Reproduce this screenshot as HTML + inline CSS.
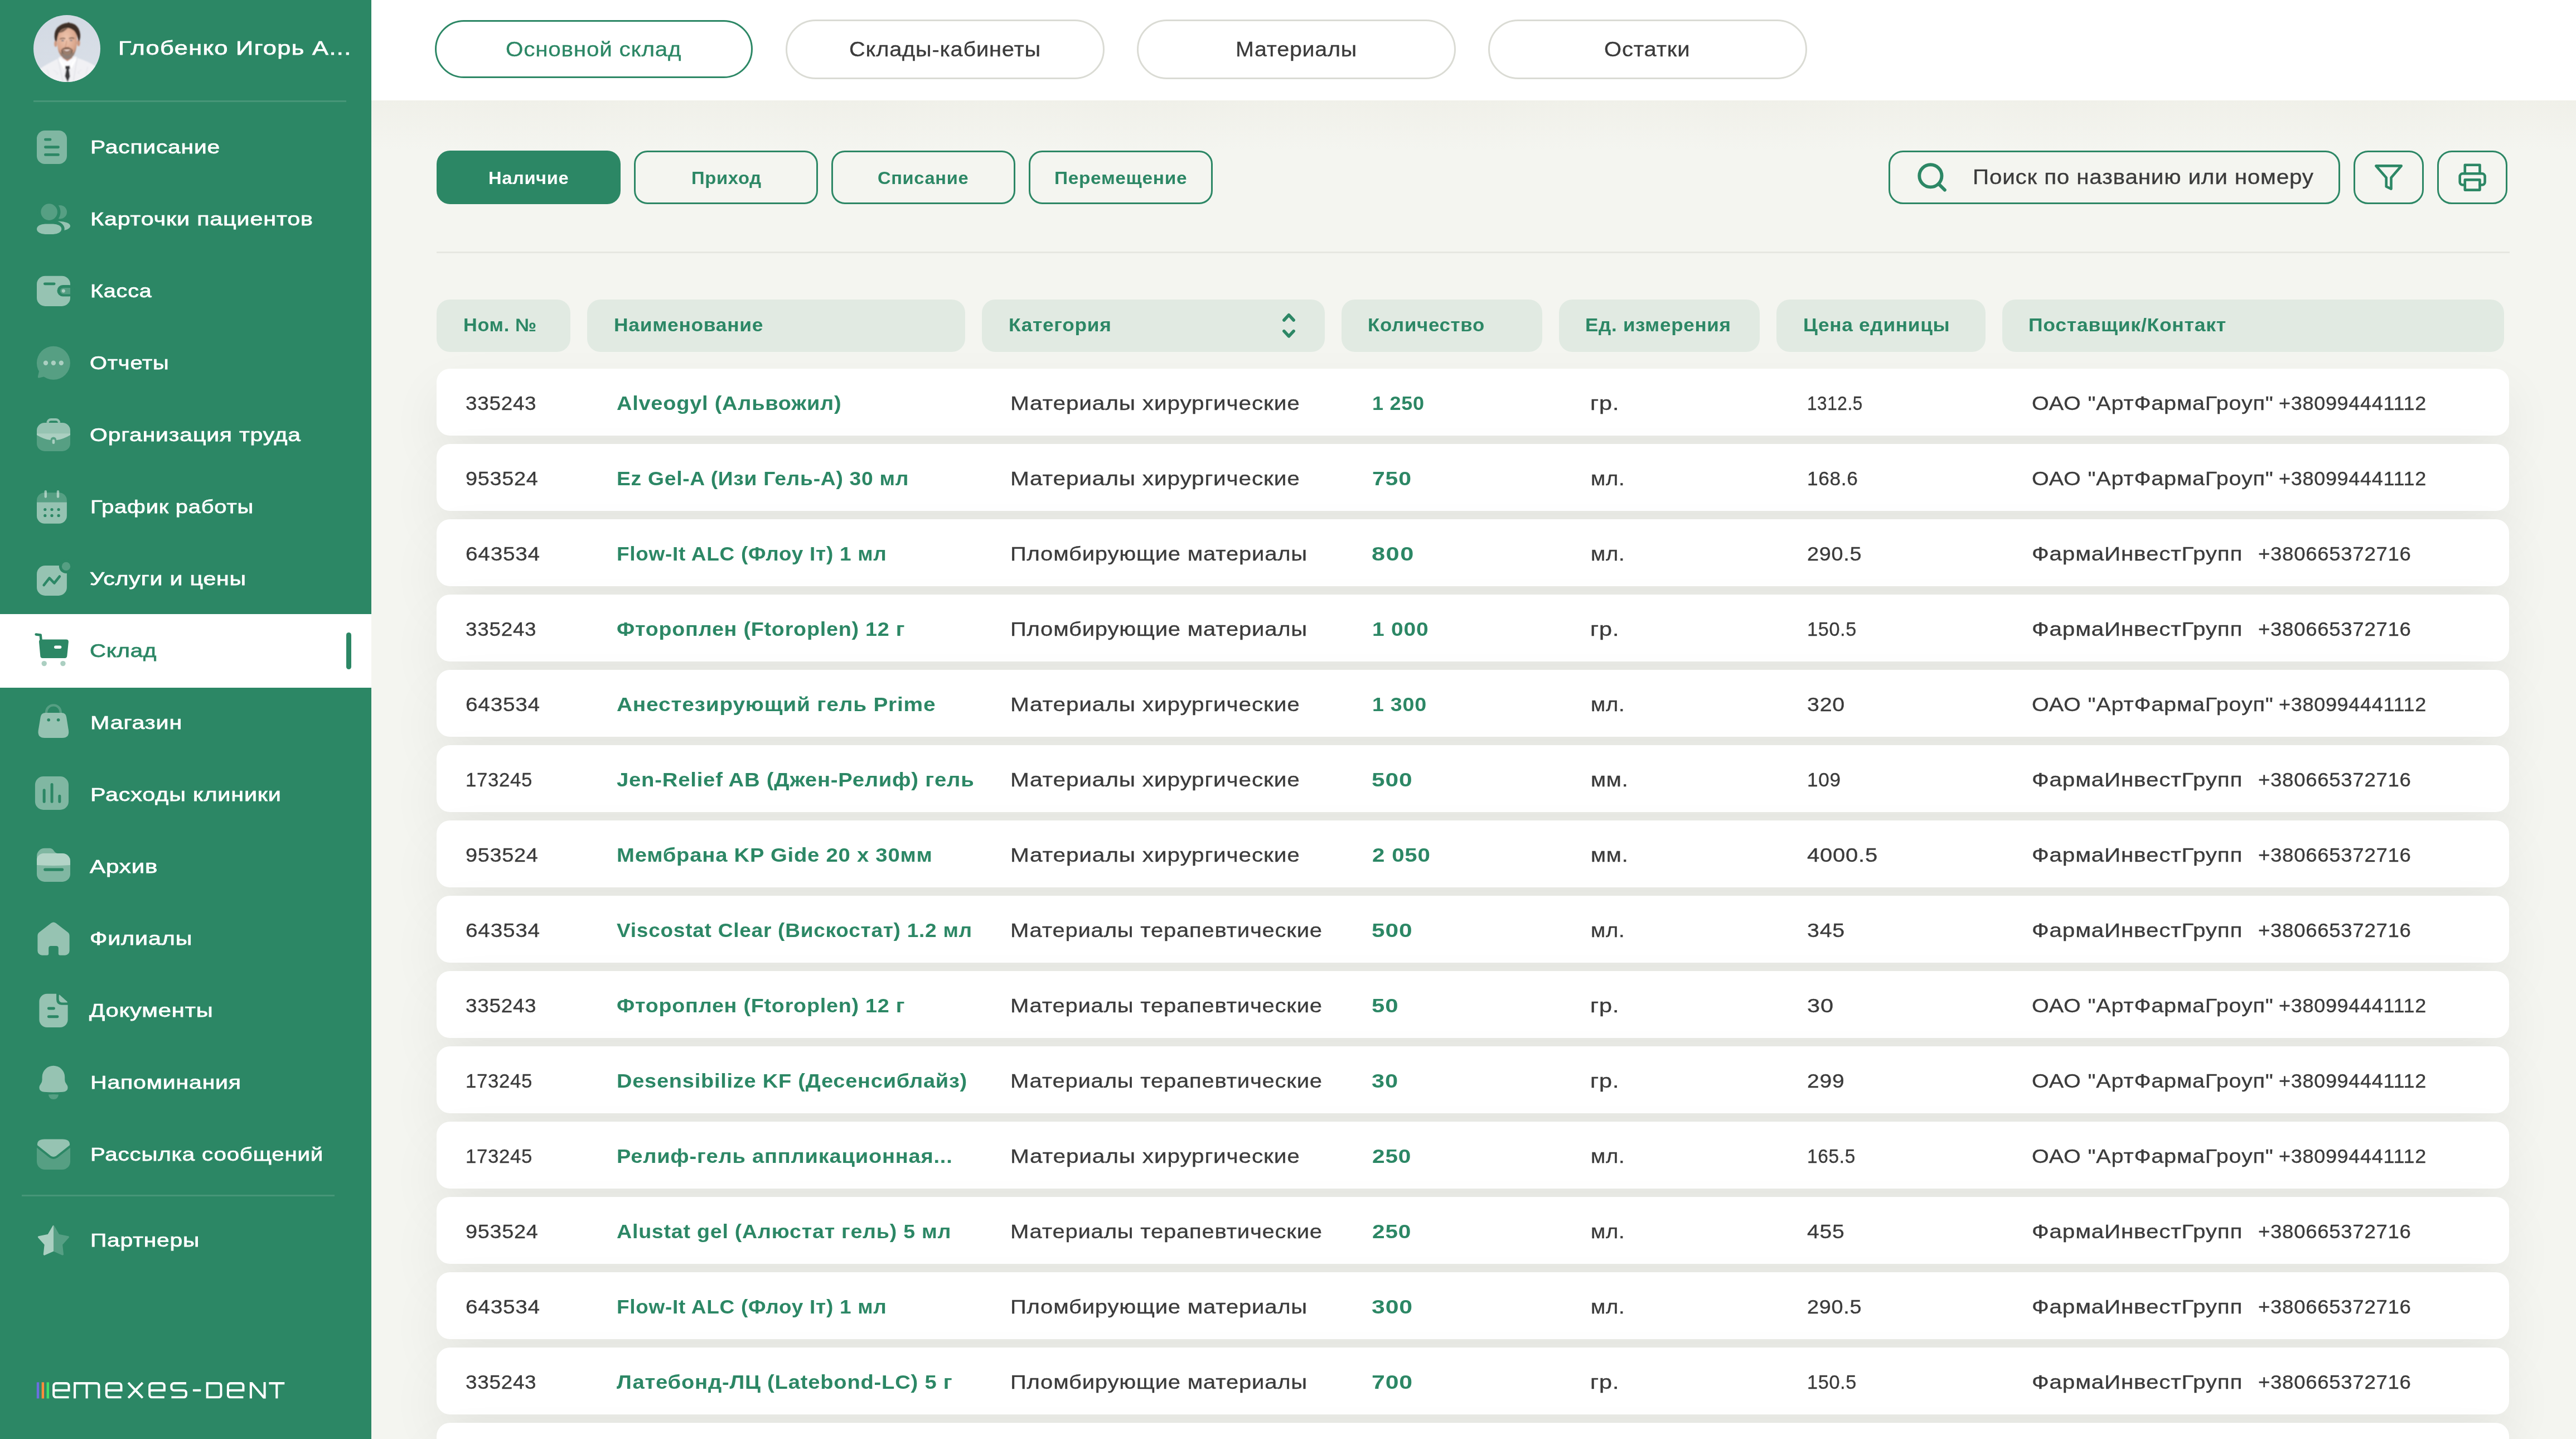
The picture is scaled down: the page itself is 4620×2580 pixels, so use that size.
<!DOCTYPE html>
<html lang="ru"><head><meta charset="utf-8"><title>Склад</title>
<style>
html,body{margin:0;padding:0}
body{width:4620px;height:2580px;overflow:hidden;position:relative;background:#f4f5f0;font-family:"Liberation Sans",sans-serif;}
.t{position:absolute;white-space:nowrap;margin:0;padding:0;transform-origin:0 50%}
.b{position:absolute;box-sizing:border-box}
svg{position:absolute;overflow:visible}
.row{position:absolute;left:783px;width:3717px;height:120px;background:#fff;border-radius:24px;box-shadow:0 40px 90px 0 rgba(10,20,0,0.064)}
.hc{position:absolute;top:537px;height:94px;background:#e1eae2;border-radius:24px}
</style></head><body>

<div class="b" style="left:666px;top:180px;width:3954px;height:90px;background:linear-gradient(#f0f0e9,#f4f5f0)"></div>
<div class="b" style="left:666px;top:0px;width:3954px;height:180px;background:#fff"></div>
<div class="b" style="left:780px;top:36px;width:570px;height:104px;border:3px solid #2c8765;border-radius:52px"></div>
<div class="b" style="left:1408.5px;top:34.5px;width:572.5px;height:107.5px;border:3px solid #dadbd4;border-radius:54px"></div>
<div class="b" style="left:2038.5px;top:34.5px;width:572.5px;height:107.5px;border:3px solid #dadbd4;border-radius:54px"></div>
<div class="b" style="left:2668.5px;top:34.5px;width:572.5px;height:107.5px;border:3px solid #dadbd4;border-radius:54px"></div>
<div class="t" id="t1" style="left:907.0px;top:64.6px;font-size:37px;line-height:48px;color:#2c8765;letter-spacing:0.74px;-webkit-text-stroke:0.35px #2c8765;transform:scaleX(1.091);">Основной склад</div>
<div class="t" id="t2" style="left:1523.0px;top:64.6px;font-size:37px;line-height:48px;color:#3b3b3b;letter-spacing:0.74px;-webkit-text-stroke:0.35px #3b3b3b;transform:scaleX(1.075);">Склады-кабинеты</div>
<div class="t" id="t3" style="left:2216.2px;top:64.6px;font-size:37px;line-height:48px;color:#3b3b3b;letter-spacing:0.74px;-webkit-text-stroke:0.35px #3b3b3b;transform:scaleX(1.064);">Материалы</div>
<div class="t" id="t4" style="left:2877.4px;top:64.6px;font-size:37px;line-height:48px;color:#3b3b3b;letter-spacing:0.74px;-webkit-text-stroke:0.35px #3b3b3b;transform:scaleX(1.083);">Остатки</div>
<div class="b" style="left:783px;top:270px;width:330px;height:96px;background:#2c8765;border-radius:24px"></div>
<div class="b" style="left:1137px;top:270px;width:330px;height:96px;border:3px solid #2c8765;border-radius:24px"></div>
<div class="b" style="left:1491px;top:270px;width:330px;height:96px;border:3px solid #2c8765;border-radius:24px"></div>
<div class="b" style="left:1845px;top:270px;width:330px;height:96px;border:3px solid #2c8765;border-radius:24px"></div>
<div class="t" id="t5" style="left:875.9px;top:299.0px;font-size:31.5px;line-height:41px;color:#fff;font-weight:700;letter-spacing:0.63px;transform:scaleX(1.036);">Наличие</div>
<div class="t" id="t6" style="left:1239.7px;top:299.0px;font-size:31.5px;line-height:41px;color:#2c8765;font-weight:700;letter-spacing:0.63px;transform:scaleX(1.042);">Приход</div>
<div class="t" id="t7" style="left:1574.2px;top:299.0px;font-size:31.5px;line-height:41px;color:#2c8765;font-weight:700;letter-spacing:0.63px;transform:scaleX(1.036);">Списание</div>
<div class="t" id="t8" style="left:1891.1px;top:299.0px;font-size:31.5px;line-height:41px;color:#2c8765;font-weight:700;letter-spacing:0.63px;transform:scaleX(1.062);">Перемещение</div>
<div class="b" style="left:3387px;top:270px;width:810px;height:96px;border:3px solid #2c8765;border-radius:26px"></div>
<div class="b" style="left:4221px;top:270px;width:126px;height:96px;border:3px solid #2c8765;border-radius:26px"></div>
<div class="b" style="left:4370.5px;top:270px;width:126px;height:96px;border:3px solid #2c8765;border-radius:26px"></div>
<div class="t" id="t9" style="left:3537.6px;top:294.3px;font-size:36.5px;line-height:47px;color:#3b3b3b;letter-spacing:0.73px;-webkit-text-stroke:0.35px #3b3b3b;transform:scaleX(1.108);">Поиск по названию или номеру</div>
<svg style="left:0;top:0" width="4620" height="400" viewBox="0 0 4620 400" fill="none" stroke="#2c8765" stroke-linecap="round" stroke-linejoin="round">
<circle cx="3462.4" cy="315.3" r="20.1" stroke-width="5.9"/>
<path d="M3477 329.8 L3487.9 340.6" stroke-width="5.9"/>
<path d="M4261.3 297.4 H4306.7 L4288.5 318.6 V338.6 L4279.7 334.5 V318.6 Z" stroke-width="4.6"/>
<path d="M4420.8 311 V295.7 H4447.5 V311" stroke-width="4.6"/>
<path d="M4420.8 331.5 H4416.7 A5 5 0 0 1 4411.7 326.5 V316.3 A5 5 0 0 1 4416.7 311.3 H4451.6 A5 5 0 0 1 4456.6 316.3 V326.5 A5 5 0 0 1 4451.6 331.5 H4447.5" stroke-width="4.6"/>
<path d="M4420.8 322.4 H4447.5 V340.6 H4420.8 Z" stroke-width="4.6"/>
</svg>

<div class="b" style="left:783px;top:450.5px;width:3718px;height:3px;background:#e6e7e1"></div>
<div class="hc" style="left:783px;width:240px"></div>
<div class="hc" style="left:1053px;width:678px"></div>
<div class="hc" style="left:1761px;width:614.5px"></div>
<div class="hc" style="left:2406px;width:360px"></div>
<div class="hc" style="left:2795.5px;width:360.5px"></div>
<div class="hc" style="left:3186px;width:374.5px"></div>
<div class="hc" style="left:3590.5px;width:900.5px"></div>
<div class="t" id="t10" style="left:831.3px;top:560.9px;font-size:32.8px;line-height:43px;color:#2c8765;font-weight:700;letter-spacing:0.66px;transform:scaleX(1.045);">Ном. №</div>
<div class="t" id="t11" style="left:1101.2px;top:560.9px;font-size:32.8px;line-height:43px;color:#2c8765;font-weight:700;letter-spacing:0.66px;transform:scaleX(1.079);">Наименование</div>
<div class="t" id="t12" style="left:1808.7px;top:560.9px;font-size:32.8px;line-height:43px;color:#2c8765;font-weight:700;letter-spacing:0.66px;transform:scaleX(1.076);">Категория</div>
<div class="t" id="t13" style="left:2453.3px;top:560.9px;font-size:32.8px;line-height:43px;color:#2c8765;font-weight:700;letter-spacing:0.66px;transform:scaleX(1.062);">Количество</div>
<div class="t" id="t14" style="left:2843.4px;top:560.9px;font-size:32.8px;line-height:43px;color:#2c8765;font-weight:700;letter-spacing:0.66px;transform:scaleX(1.068);">Ед. измерения</div>
<div class="t" id="t15" style="left:3233.8px;top:560.9px;font-size:32.8px;line-height:43px;color:#2c8765;font-weight:700;letter-spacing:0.66px;transform:scaleX(1.075);">Цена единицы</div>
<div class="t" id="t16" style="left:3638.4px;top:560.9px;font-size:32.8px;line-height:43px;color:#2c8765;font-weight:700;letter-spacing:0.66px;transform:scaleX(1.085);">Поставщик/Контакт</div>
<svg style="left:2280px;top:540px" width="60" height="90" viewBox="2280 540 60 90"><path d="M2302.9 574L2311.5 564.7L2320.1 574M2302.9 593.6L2311.5 602.9L2320.1 593.6" fill="none" stroke="#2c8765" stroke-width="5.6" stroke-linecap="round" stroke-linejoin="round"/></svg>
<div class="row" style="top:661px"></div>
<div class="t" id="t17" style="left:835.2px;top:700.9px;font-size:34.7px;line-height:45px;color:#3b3b3b;letter-spacing:0.69px;-webkit-text-stroke:0.35px #3b3b3b;transform:scaleX(1.062);">335243</div>
<div class="t" id="t18" style="left:1105.6px;top:700.9px;font-size:34.7px;line-height:45px;color:#2c8765;font-weight:700;letter-spacing:0.69px;transform:scaleX(1.095);">Alveogyl (Альвожил)</div>
<div class="t" id="t19" style="left:1812.0px;top:700.9px;font-size:34.7px;line-height:45px;color:#3b3b3b;letter-spacing:0.69px;-webkit-text-stroke:0.35px #3b3b3b;transform:scaleX(1.171);">Материалы хирургические</div>
<div class="t" id="t20" style="left:2460.7px;top:700.9px;font-size:34.7px;line-height:45px;color:#2c8765;font-weight:700;letter-spacing:0.69px;transform:scaleX(1.038);">1 250</div>
<div class="t" id="t21" style="left:2852.4px;top:700.9px;font-size:34.7px;line-height:45px;color:#3b3b3b;letter-spacing:0.69px;-webkit-text-stroke:0.35px #3b3b3b;transform:scaleX(1.198);">гр.</div>
<div class="t" id="t22" style="left:3241.4px;top:700.9px;font-size:34.7px;line-height:45px;color:#3b3b3b;letter-spacing:0.69px;-webkit-text-stroke:0.35px #3b3b3b;transform:scaleX(0.906);">1312.5</div>
<div class="t" id="t23" style="left:3643.6px;top:700.9px;font-size:34.7px;line-height:45px;color:#3b3b3b;letter-spacing:0.69px;-webkit-text-stroke:0.35px #3b3b3b;transform:scaleX(1.142);">ОАО "АртФармаГроуп"</div>
<div class="t" id="t24" style="left:4086.6px;top:700.9px;font-size:34.7px;line-height:45px;color:#3b3b3b;letter-spacing:0.69px;-webkit-text-stroke:0.35px #3b3b3b;transform:scaleX(1.037);">+380994441112</div>
<div class="row" style="top:796px"></div>
<div class="t" id="t25" style="left:835.1px;top:835.9px;font-size:34.7px;line-height:45px;color:#3b3b3b;letter-spacing:0.69px;-webkit-text-stroke:0.35px #3b3b3b;transform:scaleX(1.089);">953524</div>
<div class="t" id="t26" style="left:1105.6px;top:835.9px;font-size:34.7px;line-height:45px;color:#2c8765;font-weight:700;letter-spacing:0.69px;transform:scaleX(1.073);">Ez Gel-A (Изи Гель-А) 30 мл</div>
<div class="t" id="t27" style="left:1812.0px;top:835.9px;font-size:34.7px;line-height:45px;color:#3b3b3b;letter-spacing:0.69px;-webkit-text-stroke:0.35px #3b3b3b;transform:scaleX(1.171);">Материалы хирургические</div>
<div class="t" id="t28" style="left:2460.5px;top:835.9px;font-size:34.7px;line-height:45px;color:#2c8765;font-weight:700;letter-spacing:0.69px;transform:scaleX(1.181);">750</div>
<div class="t" id="t29" style="left:2852.6px;top:835.9px;font-size:34.7px;line-height:45px;color:#3b3b3b;letter-spacing:0.69px;-webkit-text-stroke:0.35px #3b3b3b;transform:scaleX(1.101);">мл.</div>
<div class="t" id="t30" style="left:3241.2px;top:835.9px;font-size:34.7px;line-height:45px;color:#3b3b3b;letter-spacing:0.69px;-webkit-text-stroke:0.35px #3b3b3b;transform:scaleX(1.015);">168.6</div>
<div class="t" id="t31" style="left:3643.6px;top:835.9px;font-size:34.7px;line-height:45px;color:#3b3b3b;letter-spacing:0.69px;-webkit-text-stroke:0.35px #3b3b3b;transform:scaleX(1.142);">ОАО "АртФармаГроуп"</div>
<div class="t" id="t32" style="left:4086.6px;top:835.9px;font-size:34.7px;line-height:45px;color:#3b3b3b;letter-spacing:0.69px;-webkit-text-stroke:0.35px #3b3b3b;transform:scaleX(1.037);">+380994441112</div>
<div class="row" style="top:931px"></div>
<div class="t" id="t33" style="left:835.1px;top:970.9px;font-size:34.7px;line-height:45px;color:#3b3b3b;letter-spacing:0.69px;-webkit-text-stroke:0.35px #3b3b3b;transform:scaleX(1.117);">643534</div>
<div class="t" id="t34" style="left:1105.7px;top:970.9px;font-size:34.7px;line-height:45px;color:#2c8765;font-weight:700;letter-spacing:0.69px;transform:scaleX(1.065);">Flow-It ALC (Флоу Іт) 1 мл</div>
<div class="t" id="t35" style="left:1812.0px;top:970.9px;font-size:34.7px;line-height:45px;color:#3b3b3b;letter-spacing:0.69px;-webkit-text-stroke:0.35px #3b3b3b;transform:scaleX(1.153);">Пломбирующие материалы</div>
<div class="t" id="t36" style="left:2460.3px;top:970.9px;font-size:34.7px;line-height:45px;color:#2c8765;font-weight:700;letter-spacing:1.19px;transform:scaleX(1.25);">800</div>
<div class="t" id="t37" style="left:2852.6px;top:970.9px;font-size:34.7px;line-height:45px;color:#3b3b3b;letter-spacing:0.69px;-webkit-text-stroke:0.35px #3b3b3b;transform:scaleX(1.101);">мл.</div>
<div class="t" id="t38" style="left:3241.1px;top:970.9px;font-size:34.7px;line-height:45px;color:#3b3b3b;letter-spacing:0.69px;-webkit-text-stroke:0.35px #3b3b3b;transform:scaleX(1.09);">290.5</div>
<div class="t" id="t39" style="left:3643.6px;top:970.9px;font-size:34.7px;line-height:45px;color:#3b3b3b;letter-spacing:0.69px;-webkit-text-stroke:0.35px #3b3b3b;transform:scaleX(1.166);">ФармаИнвестГрупп</div>
<div class="t" id="t40" style="left:4050.2px;top:970.9px;font-size:34.7px;line-height:45px;color:#3b3b3b;letter-spacing:0.69px;-webkit-text-stroke:0.35px #3b3b3b;transform:scaleX(1.053);">+380665372716</div>
<div class="row" style="top:1066px"></div>
<div class="t" id="t41" style="left:835.2px;top:1105.9px;font-size:34.7px;line-height:45px;color:#3b3b3b;letter-spacing:0.69px;-webkit-text-stroke:0.35px #3b3b3b;transform:scaleX(1.062);">335243</div>
<div class="t" id="t42" style="left:1105.6px;top:1105.9px;font-size:34.7px;line-height:45px;color:#2c8765;font-weight:700;letter-spacing:0.69px;transform:scaleX(1.088);">Фтороплен (Ftoroplen) 12 г</div>
<div class="t" id="t43" style="left:1812.0px;top:1105.9px;font-size:34.7px;line-height:45px;color:#3b3b3b;letter-spacing:0.69px;-webkit-text-stroke:0.35px #3b3b3b;transform:scaleX(1.153);">Пломбирующие материалы</div>
<div class="t" id="t44" style="left:2460.6px;top:1105.9px;font-size:34.7px;line-height:45px;color:#2c8765;font-weight:700;letter-spacing:0.69px;transform:scaleX(1.123);">1 000</div>
<div class="t" id="t45" style="left:2852.4px;top:1105.9px;font-size:34.7px;line-height:45px;color:#3b3b3b;letter-spacing:0.69px;-webkit-text-stroke:0.35px #3b3b3b;transform:scaleX(1.198);">гр.</div>
<div class="t" id="t46" style="left:3241.3px;top:1105.9px;font-size:34.7px;line-height:45px;color:#3b3b3b;letter-spacing:0.69px;-webkit-text-stroke:0.35px #3b3b3b;transform:scaleX(0.9859);">150.5</div>
<div class="t" id="t47" style="left:3643.6px;top:1105.9px;font-size:34.7px;line-height:45px;color:#3b3b3b;letter-spacing:0.69px;-webkit-text-stroke:0.35px #3b3b3b;transform:scaleX(1.166);">ФармаИнвестГрупп</div>
<div class="t" id="t48" style="left:4050.2px;top:1105.9px;font-size:34.7px;line-height:45px;color:#3b3b3b;letter-spacing:0.69px;-webkit-text-stroke:0.35px #3b3b3b;transform:scaleX(1.053);">+380665372716</div>
<div class="row" style="top:1201px"></div>
<div class="t" id="t49" style="left:835.1px;top:1240.9px;font-size:34.7px;line-height:45px;color:#3b3b3b;letter-spacing:0.69px;-webkit-text-stroke:0.35px #3b3b3b;transform:scaleX(1.117);">643534</div>
<div class="t" id="t50" style="left:1105.6px;top:1240.9px;font-size:34.7px;line-height:45px;color:#2c8765;font-weight:700;letter-spacing:0.69px;transform:scaleX(1.121);">Анестезирующий гель Prime</div>
<div class="t" id="t51" style="left:1812.0px;top:1240.9px;font-size:34.7px;line-height:45px;color:#3b3b3b;letter-spacing:0.69px;-webkit-text-stroke:0.35px #3b3b3b;transform:scaleX(1.171);">Материалы хирургические</div>
<div class="t" id="t52" style="left:2460.6px;top:1240.9px;font-size:34.7px;line-height:45px;color:#2c8765;font-weight:700;letter-spacing:0.69px;transform:scaleX(1.084);">1 300</div>
<div class="t" id="t53" style="left:2852.6px;top:1240.9px;font-size:34.7px;line-height:45px;color:#3b3b3b;letter-spacing:0.69px;-webkit-text-stroke:0.35px #3b3b3b;transform:scaleX(1.101);">мл.</div>
<div class="t" id="t54" style="left:3241.0px;top:1240.9px;font-size:34.7px;line-height:45px;color:#3b3b3b;letter-spacing:0.69px;-webkit-text-stroke:0.35px #3b3b3b;transform:scaleX(1.135);">320</div>
<div class="t" id="t55" style="left:3643.6px;top:1240.9px;font-size:34.7px;line-height:45px;color:#3b3b3b;letter-spacing:0.69px;-webkit-text-stroke:0.35px #3b3b3b;transform:scaleX(1.142);">ОАО "АртФармаГроуп"</div>
<div class="t" id="t56" style="left:4086.6px;top:1240.9px;font-size:34.7px;line-height:45px;color:#3b3b3b;letter-spacing:0.69px;-webkit-text-stroke:0.35px #3b3b3b;transform:scaleX(1.037);">+380994441112</div>
<div class="row" style="top:1336px"></div>
<div class="t" id="t57" style="left:835.3px;top:1375.9px;font-size:34.7px;line-height:45px;color:#3b3b3b;letter-spacing:0.69px;-webkit-text-stroke:0.35px #3b3b3b;transform:scaleX(1.002);">173245</div>
<div class="t" id="t58" style="left:1105.6px;top:1375.9px;font-size:34.7px;line-height:45px;color:#2c8765;font-weight:700;letter-spacing:0.69px;transform:scaleX(1.104);">Jen-Relief AB (Джен-Релиф) гель</div>
<div class="t" id="t59" style="left:1812.0px;top:1375.9px;font-size:34.7px;line-height:45px;color:#3b3b3b;letter-spacing:0.69px;-webkit-text-stroke:0.35px #3b3b3b;transform:scaleX(1.171);">Материалы хирургические</div>
<div class="t" id="t60" style="left:2460.4px;top:1375.9px;font-size:34.7px;line-height:45px;color:#2c8765;font-weight:700;letter-spacing:0.69px;transform:scaleX(1.224);">500</div>
<div class="t" id="t61" style="left:2852.5px;top:1375.9px;font-size:34.7px;line-height:45px;color:#3b3b3b;letter-spacing:0.69px;-webkit-text-stroke:0.35px #3b3b3b;transform:scaleX(1.135);">мм.</div>
<div class="t" id="t62" style="left:3241.2px;top:1375.9px;font-size:34.7px;line-height:45px;color:#3b3b3b;letter-spacing:0.69px;-webkit-text-stroke:0.35px #3b3b3b;transform:scaleX(1.011);">109</div>
<div class="t" id="t63" style="left:3643.6px;top:1375.9px;font-size:34.7px;line-height:45px;color:#3b3b3b;letter-spacing:0.69px;-webkit-text-stroke:0.35px #3b3b3b;transform:scaleX(1.166);">ФармаИнвестГрупп</div>
<div class="t" id="t64" style="left:4050.2px;top:1375.9px;font-size:34.7px;line-height:45px;color:#3b3b3b;letter-spacing:0.69px;-webkit-text-stroke:0.35px #3b3b3b;transform:scaleX(1.053);">+380665372716</div>
<div class="row" style="top:1471px"></div>
<div class="t" id="t65" style="left:835.1px;top:1510.9px;font-size:34.7px;line-height:45px;color:#3b3b3b;letter-spacing:0.69px;-webkit-text-stroke:0.35px #3b3b3b;transform:scaleX(1.089);">953524</div>
<div class="t" id="t66" style="left:1105.6px;top:1510.9px;font-size:34.7px;line-height:45px;color:#2c8765;font-weight:700;letter-spacing:0.69px;transform:scaleX(1.103);">Мембрана KP Gide 20 x 30мм</div>
<div class="t" id="t67" style="left:1812.0px;top:1510.9px;font-size:34.7px;line-height:45px;color:#3b3b3b;letter-spacing:0.69px;-webkit-text-stroke:0.35px #3b3b3b;transform:scaleX(1.171);">Материалы хирургические</div>
<div class="t" id="t68" style="left:2460.5px;top:1510.9px;font-size:34.7px;line-height:45px;color:#2c8765;font-weight:700;letter-spacing:0.69px;transform:scaleX(1.16);">2 050</div>
<div class="t" id="t69" style="left:2852.5px;top:1510.9px;font-size:34.7px;line-height:45px;color:#3b3b3b;letter-spacing:0.69px;-webkit-text-stroke:0.35px #3b3b3b;transform:scaleX(1.135);">мм.</div>
<div class="t" id="t70" style="left:3241.0px;top:1510.9px;font-size:34.7px;line-height:45px;color:#3b3b3b;letter-spacing:0.69px;-webkit-text-stroke:0.35px #3b3b3b;transform:scaleX(1.152);">4000.5</div>
<div class="t" id="t71" style="left:3643.6px;top:1510.9px;font-size:34.7px;line-height:45px;color:#3b3b3b;letter-spacing:0.69px;-webkit-text-stroke:0.35px #3b3b3b;transform:scaleX(1.166);">ФармаИнвестГрупп</div>
<div class="t" id="t72" style="left:4050.2px;top:1510.9px;font-size:34.7px;line-height:45px;color:#3b3b3b;letter-spacing:0.69px;-webkit-text-stroke:0.35px #3b3b3b;transform:scaleX(1.053);">+380665372716</div>
<div class="row" style="top:1606px"></div>
<div class="t" id="t73" style="left:835.1px;top:1645.9px;font-size:34.7px;line-height:45px;color:#3b3b3b;letter-spacing:0.69px;-webkit-text-stroke:0.35px #3b3b3b;transform:scaleX(1.117);">643534</div>
<div class="t" id="t74" style="left:1105.6px;top:1645.9px;font-size:34.7px;line-height:45px;color:#2c8765;font-weight:700;letter-spacing:0.69px;transform:scaleX(1.068);">Viscostat Clear (Вискостат) 1.2 мл</div>
<div class="t" id="t75" style="left:1812.0px;top:1645.9px;font-size:34.7px;line-height:45px;color:#3b3b3b;letter-spacing:0.69px;-webkit-text-stroke:0.35px #3b3b3b;transform:scaleX(1.153);">Материалы терапевтические</div>
<div class="t" id="t76" style="left:2460.4px;top:1645.9px;font-size:34.7px;line-height:45px;color:#2c8765;font-weight:700;letter-spacing:0.69px;transform:scaleX(1.224);">500</div>
<div class="t" id="t77" style="left:2852.6px;top:1645.9px;font-size:34.7px;line-height:45px;color:#3b3b3b;letter-spacing:0.69px;-webkit-text-stroke:0.35px #3b3b3b;transform:scaleX(1.101);">мл.</div>
<div class="t" id="t78" style="left:3241.0px;top:1645.9px;font-size:34.7px;line-height:45px;color:#3b3b3b;letter-spacing:0.69px;-webkit-text-stroke:0.35px #3b3b3b;transform:scaleX(1.135);">345</div>
<div class="t" id="t79" style="left:3643.6px;top:1645.9px;font-size:34.7px;line-height:45px;color:#3b3b3b;letter-spacing:0.69px;-webkit-text-stroke:0.35px #3b3b3b;transform:scaleX(1.166);">ФармаИнвестГрупп</div>
<div class="t" id="t80" style="left:4050.2px;top:1645.9px;font-size:34.7px;line-height:45px;color:#3b3b3b;letter-spacing:0.69px;-webkit-text-stroke:0.35px #3b3b3b;transform:scaleX(1.053);">+380665372716</div>
<div class="row" style="top:1741px"></div>
<div class="t" id="t81" style="left:835.2px;top:1780.9px;font-size:34.7px;line-height:45px;color:#3b3b3b;letter-spacing:0.69px;-webkit-text-stroke:0.35px #3b3b3b;transform:scaleX(1.062);">335243</div>
<div class="t" id="t82" style="left:1105.6px;top:1780.9px;font-size:34.7px;line-height:45px;color:#2c8765;font-weight:700;letter-spacing:0.69px;transform:scaleX(1.088);">Фтороплен (Ftoroplen) 12 г</div>
<div class="t" id="t83" style="left:1812.0px;top:1780.9px;font-size:34.7px;line-height:45px;color:#3b3b3b;letter-spacing:0.69px;-webkit-text-stroke:0.35px #3b3b3b;transform:scaleX(1.153);">Материалы терапевтические</div>
<div class="t" id="t84" style="left:2460.4px;top:1780.9px;font-size:34.7px;line-height:45px;color:#2c8765;font-weight:700;letter-spacing:0.69px;transform:scaleX(1.21);">50</div>
<div class="t" id="t85" style="left:2852.4px;top:1780.9px;font-size:34.7px;line-height:45px;color:#3b3b3b;letter-spacing:0.69px;-webkit-text-stroke:0.35px #3b3b3b;transform:scaleX(1.198);">гр.</div>
<div class="t" id="t86" style="left:3240.9px;top:1780.9px;font-size:34.7px;line-height:45px;color:#3b3b3b;letter-spacing:0.69px;-webkit-text-stroke:0.35px #3b3b3b;transform:scaleX(1.196);">30</div>
<div class="t" id="t87" style="left:3643.6px;top:1780.9px;font-size:34.7px;line-height:45px;color:#3b3b3b;letter-spacing:0.69px;-webkit-text-stroke:0.35px #3b3b3b;transform:scaleX(1.142);">ОАО "АртФармаГроуп"</div>
<div class="t" id="t88" style="left:4086.6px;top:1780.9px;font-size:34.7px;line-height:45px;color:#3b3b3b;letter-spacing:0.69px;-webkit-text-stroke:0.35px #3b3b3b;transform:scaleX(1.037);">+380994441112</div>
<div class="row" style="top:1876px"></div>
<div class="t" id="t89" style="left:835.3px;top:1915.9px;font-size:34.7px;line-height:45px;color:#3b3b3b;letter-spacing:0.69px;-webkit-text-stroke:0.35px #3b3b3b;transform:scaleX(1.002);">173245</div>
<div class="t" id="t90" style="left:1105.6px;top:1915.9px;font-size:34.7px;line-height:45px;color:#2c8765;font-weight:700;letter-spacing:0.69px;transform:scaleX(1.095);">Desensibilize KF (Десенсиблайз)</div>
<div class="t" id="t91" style="left:1812.0px;top:1915.9px;font-size:34.7px;line-height:45px;color:#3b3b3b;letter-spacing:0.69px;-webkit-text-stroke:0.35px #3b3b3b;transform:scaleX(1.153);">Материалы терапевтические</div>
<div class="t" id="t92" style="left:2460.4px;top:1915.9px;font-size:34.7px;line-height:45px;color:#2c8765;font-weight:700;letter-spacing:0.69px;transform:scaleX(1.196);">30</div>
<div class="t" id="t93" style="left:2852.4px;top:1915.9px;font-size:34.7px;line-height:45px;color:#3b3b3b;letter-spacing:0.69px;-webkit-text-stroke:0.35px #3b3b3b;transform:scaleX(1.198);">гр.</div>
<div class="t" id="t94" style="left:3241.0px;top:1915.9px;font-size:34.7px;line-height:45px;color:#3b3b3b;letter-spacing:0.69px;-webkit-text-stroke:0.35px #3b3b3b;transform:scaleX(1.125);">299</div>
<div class="t" id="t95" style="left:3643.6px;top:1915.9px;font-size:34.7px;line-height:45px;color:#3b3b3b;letter-spacing:0.69px;-webkit-text-stroke:0.35px #3b3b3b;transform:scaleX(1.142);">ОАО "АртФармаГроуп"</div>
<div class="t" id="t96" style="left:4086.6px;top:1915.9px;font-size:34.7px;line-height:45px;color:#3b3b3b;letter-spacing:0.69px;-webkit-text-stroke:0.35px #3b3b3b;transform:scaleX(1.037);">+380994441112</div>
<div class="row" style="top:2011px"></div>
<div class="t" id="t97" style="left:835.3px;top:2050.9px;font-size:34.7px;line-height:45px;color:#3b3b3b;letter-spacing:0.69px;-webkit-text-stroke:0.35px #3b3b3b;transform:scaleX(1.002);">173245</div>
<div class="t" id="t98" style="left:1105.6px;top:2050.9px;font-size:34.7px;line-height:45px;color:#2c8765;font-weight:700;letter-spacing:0.69px;transform:scaleX(1.099);">Релиф-гель аппликационная...</div>
<div class="t" id="t99" style="left:1812.0px;top:2050.9px;font-size:34.7px;line-height:45px;color:#3b3b3b;letter-spacing:0.69px;-webkit-text-stroke:0.35px #3b3b3b;transform:scaleX(1.171);">Материалы хирургические</div>
<div class="t" id="t100" style="left:2460.5px;top:2050.9px;font-size:34.7px;line-height:45px;color:#2c8765;font-weight:700;letter-spacing:0.69px;transform:scaleX(1.171);">250</div>
<div class="t" id="t101" style="left:2852.6px;top:2050.9px;font-size:34.7px;line-height:45px;color:#3b3b3b;letter-spacing:0.69px;-webkit-text-stroke:0.35px #3b3b3b;transform:scaleX(1.101);">мл.</div>
<div class="t" id="t102" style="left:3241.3px;top:2050.9px;font-size:34.7px;line-height:45px;color:#3b3b3b;letter-spacing:0.69px;-webkit-text-stroke:0.35px #3b3b3b;transform:scaleX(0.9628);">165.5</div>
<div class="t" id="t103" style="left:3643.6px;top:2050.9px;font-size:34.7px;line-height:45px;color:#3b3b3b;letter-spacing:0.69px;-webkit-text-stroke:0.35px #3b3b3b;transform:scaleX(1.142);">ОАО "АртФармаГроуп"</div>
<div class="t" id="t104" style="left:4086.6px;top:2050.9px;font-size:34.7px;line-height:45px;color:#3b3b3b;letter-spacing:0.69px;-webkit-text-stroke:0.35px #3b3b3b;transform:scaleX(1.037);">+380994441112</div>
<div class="row" style="top:2146px"></div>
<div class="t" id="t105" style="left:835.1px;top:2185.9px;font-size:34.7px;line-height:45px;color:#3b3b3b;letter-spacing:0.69px;-webkit-text-stroke:0.35px #3b3b3b;transform:scaleX(1.089);">953524</div>
<div class="t" id="t106" style="left:1105.6px;top:2185.9px;font-size:34.7px;line-height:45px;color:#2c8765;font-weight:700;letter-spacing:0.69px;transform:scaleX(1.085);">Alustat gel (Алюстат гель) 5 мл</div>
<div class="t" id="t107" style="left:1812.0px;top:2185.9px;font-size:34.7px;line-height:45px;color:#3b3b3b;letter-spacing:0.69px;-webkit-text-stroke:0.35px #3b3b3b;transform:scaleX(1.153);">Материалы терапевтические</div>
<div class="t" id="t108" style="left:2460.5px;top:2185.9px;font-size:34.7px;line-height:45px;color:#2c8765;font-weight:700;letter-spacing:0.69px;transform:scaleX(1.171);">250</div>
<div class="t" id="t109" style="left:2852.6px;top:2185.9px;font-size:34.7px;line-height:45px;color:#3b3b3b;letter-spacing:0.69px;-webkit-text-stroke:0.35px #3b3b3b;transform:scaleX(1.101);">мл.</div>
<div class="t" id="t110" style="left:3241.0px;top:2185.9px;font-size:34.7px;line-height:45px;color:#3b3b3b;letter-spacing:0.69px;-webkit-text-stroke:0.35px #3b3b3b;transform:scaleX(1.127);">455</div>
<div class="t" id="t111" style="left:3643.6px;top:2185.9px;font-size:34.7px;line-height:45px;color:#3b3b3b;letter-spacing:0.69px;-webkit-text-stroke:0.35px #3b3b3b;transform:scaleX(1.166);">ФармаИнвестГрупп</div>
<div class="t" id="t112" style="left:4050.2px;top:2185.9px;font-size:34.7px;line-height:45px;color:#3b3b3b;letter-spacing:0.69px;-webkit-text-stroke:0.35px #3b3b3b;transform:scaleX(1.053);">+380665372716</div>
<div class="row" style="top:2281px"></div>
<div class="t" id="t113" style="left:835.1px;top:2320.9px;font-size:34.7px;line-height:45px;color:#3b3b3b;letter-spacing:0.69px;-webkit-text-stroke:0.35px #3b3b3b;transform:scaleX(1.117);">643534</div>
<div class="t" id="t114" style="left:1105.7px;top:2320.9px;font-size:34.7px;line-height:45px;color:#2c8765;font-weight:700;letter-spacing:0.69px;transform:scaleX(1.065);">Flow-It ALC (Флоу Іт) 1 мл</div>
<div class="t" id="t115" style="left:1812.0px;top:2320.9px;font-size:34.7px;line-height:45px;color:#3b3b3b;letter-spacing:0.69px;-webkit-text-stroke:0.35px #3b3b3b;transform:scaleX(1.153);">Пломбирующие материалы</div>
<div class="t" id="t116" style="left:2460.4px;top:2320.9px;font-size:34.7px;line-height:45px;color:#2c8765;font-weight:700;letter-spacing:0.69px;transform:scaleX(1.233);">300</div>
<div class="t" id="t117" style="left:2852.6px;top:2320.9px;font-size:34.7px;line-height:45px;color:#3b3b3b;letter-spacing:0.69px;-webkit-text-stroke:0.35px #3b3b3b;transform:scaleX(1.101);">мл.</div>
<div class="t" id="t118" style="left:3241.1px;top:2320.9px;font-size:34.7px;line-height:45px;color:#3b3b3b;letter-spacing:0.69px;-webkit-text-stroke:0.35px #3b3b3b;transform:scaleX(1.09);">290.5</div>
<div class="t" id="t119" style="left:3643.6px;top:2320.9px;font-size:34.7px;line-height:45px;color:#3b3b3b;letter-spacing:0.69px;-webkit-text-stroke:0.35px #3b3b3b;transform:scaleX(1.166);">ФармаИнвестГрупп</div>
<div class="t" id="t120" style="left:4050.2px;top:2320.9px;font-size:34.7px;line-height:45px;color:#3b3b3b;letter-spacing:0.69px;-webkit-text-stroke:0.35px #3b3b3b;transform:scaleX(1.053);">+380665372716</div>
<div class="row" style="top:2416px"></div>
<div class="t" id="t121" style="left:835.2px;top:2455.9px;font-size:34.7px;line-height:45px;color:#3b3b3b;letter-spacing:0.69px;-webkit-text-stroke:0.35px #3b3b3b;transform:scaleX(1.062);">335243</div>
<div class="t" id="t122" style="left:1105.6px;top:2455.9px;font-size:34.7px;line-height:45px;color:#2c8765;font-weight:700;letter-spacing:0.69px;transform:scaleX(1.102);">Латебонд-ЛЦ (Latebond-LC) 5 г</div>
<div class="t" id="t123" style="left:1812.0px;top:2455.9px;font-size:34.7px;line-height:45px;color:#3b3b3b;letter-spacing:0.69px;-webkit-text-stroke:0.35px #3b3b3b;transform:scaleX(1.153);">Пломбирующие материалы</div>
<div class="t" id="t124" style="left:2460.4px;top:2455.9px;font-size:34.7px;line-height:45px;color:#2c8765;font-weight:700;letter-spacing:0.69px;transform:scaleX(1.233);">700</div>
<div class="t" id="t125" style="left:2852.4px;top:2455.9px;font-size:34.7px;line-height:45px;color:#3b3b3b;letter-spacing:0.69px;-webkit-text-stroke:0.35px #3b3b3b;transform:scaleX(1.198);">гр.</div>
<div class="t" id="t126" style="left:3241.3px;top:2455.9px;font-size:34.7px;line-height:45px;color:#3b3b3b;letter-spacing:0.69px;-webkit-text-stroke:0.35px #3b3b3b;transform:scaleX(0.9859);">150.5</div>
<div class="t" id="t127" style="left:3643.6px;top:2455.9px;font-size:34.7px;line-height:45px;color:#3b3b3b;letter-spacing:0.69px;-webkit-text-stroke:0.35px #3b3b3b;transform:scaleX(1.166);">ФармаИнвестГрупп</div>
<div class="t" id="t128" style="left:4050.2px;top:2455.9px;font-size:34.7px;line-height:45px;color:#3b3b3b;letter-spacing:0.69px;-webkit-text-stroke:0.35px #3b3b3b;transform:scaleX(1.053);">+380665372716</div>
<div class="row" style="top:2551px"></div>
<div class="b" style="left:0px;top:0px;width:666px;height:2580px;background:#2c8765"></div>
<svg style="left:60px;top:27px" width="120" height="120" viewBox="0 0 1234 1234">
<defs>
<clipPath id="avc"><circle cx="617" cy="617" r="617"/></clipPath>
<filter id="avb" x="-5%" y="-5%" width="110%" height="110%"><feGaussianBlur stdDeviation="10"/></filter>
<linearGradient id="avbg" x1="0" y1="0" x2=".3" y2="1"><stop offset="0" stop-color="#d2d9e3"/><stop offset="1" stop-color="#d9dfe7"/></linearGradient>
<radialGradient id="avsk" cx=".45" cy=".35" r=".75"><stop offset="0" stop-color="#eec5ae"/><stop offset=".6" stop-color="#dca98f"/><stop offset="1" stop-color="#b9836b"/></radialGradient>
</defs>
<g clip-path="url(#avc)">
<rect width="1234" height="1234" fill="url(#avbg)"/>
<g filter="url(#avb)">
<!-- coat -->
<path d="M90 1010 Q240 905 450 805 L470 775 L790 762 L810 792 Q1000 850 1150 945 L1300 1300 H-60 Z" fill="#f1f1f4"/>
<path d="M452 805 L545 1234 M806 792 L735 1234" stroke="#dcdde4" stroke-width="12" fill="none"/>
<path d="M370 1015 L455 1075 L425 1098 M885 1005 L815 1060 L850 1082" stroke="#dfe0e6" stroke-width="9" fill="none"/>
<path d="M250 1000 Q300 1100 290 1234 M1000 960 Q960 1080 980 1234" stroke="#e6e7ec" stroke-width="16" fill="none"/>
<!-- neck -->
<path d="M535 690 H715 V790 L625 850 L535 790 Z" fill="#c18d76"/>
<!-- shirt & collar -->
<path d="M478 782 L622 985 L782 768 L700 820 L625 860 L545 825 Z" fill="#fcfcfe"/>
<path d="M488 800 L600 955 L560 1002 L468 832 Z M772 790 L652 952 L700 992 L792 822 Z" fill="#ffffff"/>
<!-- tie -->
<path d="M588 938 L668 933 L675 985 L655 1002 L674 1130 L632 1240 L580 1125 L606 1002 L586 985 Z" fill="#38383b"/>
<!-- ears -->
<ellipse cx="410" cy="528" rx="27" ry="62" fill="#d09a80"/><ellipse cx="832" cy="515" rx="27" ry="62" fill="#cc947a"/>
<!-- face -->
<path d="M440 430 Q432 250 620 232 Q805 240 802 430 Q812 560 772 672 Q705 812 615 812 Q522 806 466 684 Q432 570 440 430 Z" fill="url(#avsk)"/>
<!-- hair -->
<path d="M398 470 Q362 330 440 232 Q520 150 635 143 Q650 120 660 143 Q780 150 832 250 Q884 360 852 462 L836 492 Q822 430 800 372 Q760 262 640 236 Q510 240 468 330 Q438 400 428 492 Z" fill="#3d2d25"/>
<path d="M470 330 Q520 250 640 238 Q600 270 560 300 Q510 330 470 330 Z" fill="#4a382e" fill-opacity=".7"/>
<!-- brows, eyes -->
<path d="M488 442 Q535 416 588 436 M655 433 Q706 410 752 432" stroke="#49352b" stroke-width="15" fill="none"/>
<ellipse cx="538" cy="472" rx="25" ry="11" fill="#56687a"/><ellipse cx="695" cy="468" rx="25" ry="11" fill="#56687a"/>
<!-- nose shadow -->
<path d="M612 470 Q602 560 586 586 Q620 606 656 586" stroke="#c38a70" stroke-width="11" fill="none"/>
<!-- beard: jaw stubble -->
<path d="M452 590 Q470 700 522 762 Q572 816 620 816 Q690 812 736 752 Q776 690 786 585 Q770 660 730 700 L700 640 H540 L505 700 Q468 660 452 590 Z" fill="#8a7465" fill-opacity=".8"/>
<!-- goatee/chin grey -->
<path d="M520 690 Q545 812 620 816 Q700 812 725 690 Q690 740 620 742 Q555 740 520 690 Z" fill="#8d7f78"/>
<!-- mustache -->
<path d="M508 650 Q540 596 615 598 Q690 596 728 648 Q690 622 620 622 Q550 622 508 650 Z" fill="#4c382e"/>
<path d="M508 650 Q520 700 560 720 Q530 690 530 640 Z M728 648 Q716 700 680 720 Q708 690 706 640 Z" fill="#5d493e"/>
<!-- mouth -->
<path d="M556 640 Q615 692 680 638 Q615 652 556 640 Z" fill="#f7f1ee"/>
<path d="M556 644 Q615 702 680 641" stroke="#8d5148" stroke-width="7" fill="none"/>
</g>
</g>
</svg>

<div class="t" id="t129" style="left:211.8px;top:63.5px;font-size:34.7px;line-height:45px;color:#fff;letter-spacing:1.08px;-webkit-text-stroke:0.75px #fff;transform:scaleX(1.25);">Глобенко Игорь А...</div>
<div class="b" style="left:60px;top:180px;width:561px;height:3px;background:rgba(255,255,255,0.13)"></div>
<div class="b" style="left:39px;top:2141.5px;width:561px;height:3px;background:rgba(255,255,255,0.13)"></div>
<div class="b" style="left:0px;top:1101px;width:666px;height:132px;background:#fff"></div>
<div class="b" style="left:621px;top:1134px;width:9px;height:66px;background:#2c8765;border-radius:4.5px"></div>
<div class="t" id="t130" style="left:162.2px;top:241.4px;font-size:33.7px;line-height:44px;color:#fff;letter-spacing:0.67px;-webkit-text-stroke:0.75px #fff;transform:scaleX(1.211);">Расписание</div>
<div class="t" id="t131" style="left:161.9px;top:370.4px;font-size:33.7px;line-height:44px;color:#fff;letter-spacing:0.67px;-webkit-text-stroke:0.75px #fff;transform:scaleX(1.226);">Карточки пациентов</div>
<div class="t" id="t132" style="left:162.0px;top:499.4px;font-size:33.7px;line-height:44px;color:#fff;letter-spacing:0.67px;-webkit-text-stroke:0.75px #fff;transform:scaleX(1.174);">Касса</div>
<div class="t" id="t133" style="left:161.0px;top:628.4px;font-size:33.7px;line-height:44px;color:#fff;letter-spacing:0.67px;-webkit-text-stroke:0.75px #fff;transform:scaleX(1.183);">Отчеты</div>
<div class="t" id="t134" style="left:160.8px;top:757.4px;font-size:33.7px;line-height:44px;color:#fff;letter-spacing:0.67px;-webkit-text-stroke:0.75px #fff;transform:scaleX(1.215);">Организация труда</div>
<div class="t" id="t135" style="left:162.2px;top:886.4px;font-size:33.7px;line-height:44px;color:#fff;letter-spacing:0.67px;-webkit-text-stroke:0.75px #fff;transform:scaleX(1.183);">График работы</div>
<div class="t" id="t136" style="left:160.7px;top:1015.4px;font-size:33.7px;line-height:44px;color:#fff;letter-spacing:0.67px;-webkit-text-stroke:0.75px #fff;transform:scaleX(1.22);">Услуги и цены</div>
<div class="t" id="t137" style="left:160.8px;top:1144.4px;font-size:33.7px;line-height:44px;color:#2c8765;letter-spacing:0.67px;-webkit-text-stroke:0.75px #2c8765;transform:scaleX(1.191);">Склад</div>
<div class="t" id="t138" style="left:162.1px;top:1273.4px;font-size:33.7px;line-height:44px;color:#fff;letter-spacing:0.67px;-webkit-text-stroke:0.75px #fff;transform:scaleX(1.226);">Магазин</div>
<div class="t" id="t139" style="left:162.1px;top:1402.4px;font-size:33.7px;line-height:44px;color:#fff;letter-spacing:0.67px;-webkit-text-stroke:0.75px #fff;transform:scaleX(1.227);">Расходы клиники</div>
<div class="t" id="t140" style="left:160.7px;top:1531.4px;font-size:33.7px;line-height:44px;color:#fff;letter-spacing:0.69px;-webkit-text-stroke:0.75px #fff;transform:scaleX(1.25);">Архив</div>
<div class="t" id="t141" style="left:160.7px;top:1660.4px;font-size:33.7px;line-height:44px;color:#fff;letter-spacing:0.67px;-webkit-text-stroke:0.75px #fff;transform:scaleX(1.226);">Филиалы</div>
<div class="t" id="t142" style="left:159.6px;top:1789.4px;font-size:33.7px;line-height:44px;color:#fff;letter-spacing:0.67px;-webkit-text-stroke:0.75px #fff;transform:scaleX(1.238);">Документы</div>
<div class="t" id="t143" style="left:162.1px;top:1918.4px;font-size:33.7px;line-height:44px;color:#fff;letter-spacing:0.67px;-webkit-text-stroke:0.75px #fff;transform:scaleX(1.218);">Напоминания</div>
<div class="t" id="t144" style="left:162.2px;top:2047.4px;font-size:33.7px;line-height:44px;color:#fff;letter-spacing:0.67px;-webkit-text-stroke:0.75px #fff;transform:scaleX(1.196);">Рассылка сообщений</div>
<div class="t" id="t145" style="left:162.2px;top:2200.7px;font-size:33.7px;line-height:44px;color:#fff;letter-spacing:0.67px;-webkit-text-stroke:0.75px #fff;transform:scaleX(1.21);">Партнеры</div>
<svg style="left:0;top:0" width="666" height="2580" viewBox="0 0 666 2580">
<defs>
<clipPath id="stL"><rect x="60" y="2190" width="35.9" height="70"/></clipPath>
<clipPath id="stR"><rect x="95.9" y="2190" width="40" height="70"/></clipPath>
</defs>
<g fill="#fff" stroke="none">
<!-- 1 schedule -->
<rect x="66" y="234" width="54" height="60" rx="14.5" fill-opacity=".4"/>
<path d="M81.4 250.2H90M81.4 263.75H104.5M81.4 277.45H104.5" stroke="#2c8765" stroke-width="4.8" stroke-linecap="round" fill="none"/>
<!-- 2 patients -->
<circle cx="107.8" cy="380.2" r="12.2" fill-opacity=".2"/>
<circle cx="88.1" cy="380.1" r="20.4" fill="#2c8765"/>
<ellipse cx="106" cy="405.3" rx="20" ry="8.6" fill-opacity=".5"/>
<rect x="60.6" y="395.6" width="55.1" height="30" rx="20" ry="15" fill="#2c8765"/>
<circle cx="88.1" cy="380.1" r="14.8" fill-opacity=".2"/>
<rect x="66" y="401.4" width="44.3" height="18.5" rx="15" ry="9.25" fill-opacity=".5"/>
<!-- 3 wallet -->
<rect x="66" y="494.7" width="60" height="54.2" rx="15" fill-opacity=".5"/>
<path d="M80.3 508.85H97.2" stroke="#2c8765" stroke-width="4.7" stroke-linecap="round" fill="none"/>
<rect x="102.5" y="510.9" width="32" height="20.6" rx="10.3" fill="#2c8765"/>
<path d="M126 515.9H113.75A5.75 5.75 0 0 0 113.75 527.4H126Z" fill-opacity=".2"/>
<circle cx="113.8" cy="521.6" r="3.1" fill-opacity=".5"/>
<!-- 4 chat -->
<path d="M95.9 620.7A30 30 0 1 1 95.9 680.7A30 30 0 1 1 95.9 620.7ZM70.8 662L82 674.6L70.2 677.4Q67.4 678 67.9 675.2Z" fill-opacity=".2"/>
<circle cx="82" cy="650.7" r="4.2" fill-opacity=".5"/><circle cx="95.9" cy="650.7" r="4.2" fill-opacity=".5"/><circle cx="109.8" cy="650.7" r="4.2" fill-opacity=".5"/>
<!-- 5 briefcase -->
<path d="M85.55 757.9A6 6 0 0 1 91.55 752.05H100.05A6 6 0 0 1 106.05 757.9" stroke="#fff" stroke-opacity=".5" stroke-width="4.3" fill="none"/>
<path d="M66 771.9A14 14 0 0 1 80 757.9H112A14 14 0 0 1 126 771.9V780Q113.5 787.6 101.2 789.1V788.7A5.3 5.3 0 0 0 90.6 788.7V789.1Q78.5 787.6 66 780Z" fill-opacity=".5"/>
<path d="M66 777.3H126V794.9A14 14 0 0 1 112 808.9H80A14 14 0 0 1 66 794.9Z" fill-opacity=".2"/>
<rect x="93.7" y="787.7" width="4.5" height="8.4" rx="2.25" fill-opacity=".5"/>
<!-- 6 calendar -->
<path d="M66 900.6V897.2A14 14 0 0 1 80 883.2H105.9A14 14 0 0 1 119.9 897.2V900.6Z" fill-opacity=".2"/>
<path d="M66 900.6H119.9V924.8A14 14 0 0 1 105.9 938.8H80A14 14 0 0 1 66 924.8Z" fill-opacity=".5"/>
<rect x="79.6" y="878.9" width="4.4" height="13.9" rx="2.2" fill-opacity=".5"/><rect x="101.8" y="878.9" width="4.4" height="13.9" rx="2.2" fill-opacity=".5"/>
<g fill="#2c8765"><circle cx="80.8" cy="913.5" r="2.6"/><circle cx="93" cy="913.5" r="2.6"/><circle cx="105.1" cy="913.5" r="2.6"/><circle cx="80.8" cy="924.4" r="2.6"/><circle cx="93" cy="924.4" r="2.6"/><circle cx="105.1" cy="924.4" r="2.6"/></g>
<!-- 7 activity -->
<rect x="66" y="1014" width="53.9" height="53.9" rx="15" fill-opacity=".5"/>
<circle cx="118.5" cy="1015.3" r="12.6" fill="#2c8765"/>
<circle cx="118.5" cy="1015.3" r="7.6" fill-opacity=".2"/>
<path d="M78.6 1049.1L88.6 1036.4L97.3 1045.5L106.9 1033.5" stroke="#2c8765" stroke-width="4.5" stroke-linecap="round" stroke-linejoin="round" fill="none"/>
<!-- 8 cart (active) -->
<path d="M64.6 1137.4L72.7 1138.5L73.9 1151" stroke="#2c8765" stroke-width="4.5" stroke-linecap="round" stroke-linejoin="round" fill="none"/>
<path d="M74.1 1150.7H118.8L116.2 1175.8H76.4Z" fill="#2c8765" stroke="#2c8765" stroke-width="8.2" stroke-linejoin="round"/>
<rect x="97" y="1157.5" width="13.3" height="5.5" rx="2.75" fill="#fff"/>
<circle cx="79.2" cy="1189.6" r="4.7" fill="#2c8765" fill-opacity=".4"/><circle cx="112.9" cy="1189.6" r="4.7" fill="#2c8765" fill-opacity=".4"/>
<!-- 9 bag -->
<path d="M82.95 1277.9V1277.3A12.95 12.95 0 0 1 108.85 1277.3V1277.9" stroke="#fff" stroke-opacity=".2" stroke-width="4.3" fill="none"/>
<path d="M81.5 1277.9H110.5Q118 1277.9 119.1 1285.5L123 1309.5Q124.8 1323 111.5 1323H80.2Q66.9 1323 68.7 1309.5L72.7 1285.5Q73.9 1277.9 81.5 1277.9Z" fill-opacity=".5"/>
<circle cx="87.2" cy="1290.7" r="2.8" fill="#2c8765"/><circle cx="104.6" cy="1290.7" r="2.8" fill="#2c8765"/>
<!-- 10 chart -->
<rect x="62.9" y="1392" width="60.1" height="59.9" rx="15" fill-opacity=".4"/>
<path d="M79.15 1416.7V1437.2M93.05 1406.4V1437.2M106.85 1427.3V1437.2" stroke="#2c8765" stroke-width="5" stroke-linecap="round" fill="none"/>
<!-- 11 folder -->
<path d="M66 1534.8A14 14 0 0 1 80 1520.8H89Q93.3 1520.8 95.8 1524.3L97.6 1526.8Q99.8 1529.9 104 1529.9H112A14 14 0 0 1 126 1543.9V1566.9A14 14 0 0 1 112 1580.9H80A14 14 0 0 1 66 1566.9Z" fill-opacity=".4"/>
<path d="M66 1551V1541.9A12 12 0 0 1 78 1529.9H112A14 14 0 0 1 126 1543.9V1551Q96 1553 66 1551Z" fill-opacity=".4"/>
<path d="M80.9 1559.1H111.5" stroke="#2c8765" stroke-width="5.4" stroke-linecap="round" fill="none"/>
<!-- 12 home -->
<path d="M91.6 1655.1Q95.9 1651.7 100.2 1655.1L121.6 1671.6Q124.6 1674 124.6 1678V1704.7A8 8 0 0 1 116.6 1712.7H107.8Q104.8 1712.7 104.8 1709.7V1699.9A4 4 0 0 0 100.8 1695.9H91.2A4 4 0 0 0 87.2 1699.9V1709.7Q87.2 1712.7 84.2 1712.7H75.4A8 8 0 0 1 67.4 1704.7V1678Q67.4 1674 70.4 1671.6Z" fill-opacity=".5"/>
<!-- 13 document -->
<path d="M84.4 1781.7H101.1V1792.1Q101.1 1801.7 110.5 1801.7H121.6V1828A14 14 0 0 1 107.6 1842H84.4A14 14 0 0 1 70.4 1828V1795.7A14 14 0 0 1 84.4 1781.7Z" fill-opacity=".5"/>
<path d="M105.6 1785Q105.6 1782.4 107.6 1784.2L120.2 1795.6Q122 1797.6 119.4 1797.6H112.6Q105.6 1797.6 105.6 1791Z" fill-opacity=".5"/>
<path d="M87.3 1807.95H96.5M87.3 1822.8H103" stroke="#2c8765" stroke-width="4.9" stroke-linecap="round" fill="none"/>
<!-- 14 bell -->
<path d="M75.6 1931A20.3 20.3 0 0 1 116.2 1931V1936Q116.2 1940 119 1943.5Q121.6 1946.7 121.6 1950Q121.6 1957 113 1957.7Q96 1959.3 79 1957.7Q70.4 1957 70.4 1950Q70.4 1946.7 73 1943.5Q75.6 1940 75.6 1936Z" fill-opacity=".5"/>
<path d="M86.9 1962.6Q96 1961.5 105.1 1962.6Q104 1971 96 1971Q88 1971 86.9 1962.6Z" fill-opacity=".2"/>
<!-- 15 envelope -->
<rect x="66" y="2042.6" width="60" height="54.3" rx="14.5" fill-opacity=".2"/>
<path d="M67 2053.3Q66 2042.6 80 2042.6H112Q126 2042.6 125 2053.3L101 2072.2Q95.9 2075.6 90.8 2072.2Z" fill="#2c8765" stroke="#2c8765" stroke-width="8" stroke-linejoin="round"/>
<path d="M67 2053.3Q66 2042.6 80 2042.6H112Q126 2042.6 125 2053.3L101 2072.2Q95.9 2075.6 90.8 2072.2Z" fill-opacity=".5"/>
<!-- 16 star -->
<g opacity=".6" clip-path="url(#stL)"><path id="star" d="M95.9 2198.8L104.9 2214.3L122.2 2217.9L110.4 2231.2L112.3 2248.9L95.9 2241.7L79.5 2248.9L81.4 2231.2L69.6 2217.9L86.9 2214.3Z" stroke="#fff" stroke-width="3.4" stroke-linejoin="round"/></g>
<g opacity=".2" clip-path="url(#stR)"><path d="M95.9 2198.8L104.9 2214.3L122.2 2217.9L110.4 2231.2L112.3 2248.9L95.9 2241.7L79.5 2248.9L81.4 2231.2L69.6 2217.9L86.9 2214.3Z" stroke="#fff" stroke-width="3.4" stroke-linejoin="round"/></g>
</g>
</svg>

<svg style="left:0;top:2440px" width="666" height="100" viewBox="0 2440 666 100">
<rect x="65.8" y="2478.3" width="4.4" height="29.1" fill="#6b6fe0"/><rect x="74.7" y="2478.3" width="4.4" height="29.1" fill="#ff8c3a"/><rect x="83.6" y="2478.3" width="4.4" height="29.1" fill="#3fe06a"/>
<clipPath id="lgc"><rect x="60" y="2478" width="480" height="29.4"/></clipPath><path clip-path="url(#lgc)" d="M96.2 2492.7 H123.5 V2484.6 A4.5 4.5 0 0 0 119.0 2480.1 H100.8 A4.5 4.5 0 0 0 96.2 2484.6 V2500.8 A4.5 4.5 0 0 0 100.8 2505.3 H123.5 M134.1 2507.4 V2480.1 H172.9 A4.5 4.5 0 0 1 177.4 2484.6 V2507.4 M155.6 2480.1 V2507.4 M190.9 2492.7 H217.5 V2484.6 A4.5 4.5 0 0 0 213.0 2480.1 H195.4 A4.5 4.5 0 0 0 190.9 2484.6 V2500.8 A4.5 4.5 0 0 0 195.4 2505.3 H217.5 M230.1 2479.0 L255.8 2506.4 M255.8 2479.0 L230.1 2506.4 M268.2 2492.7 H294.8 V2484.6 A4.5 4.5 0 0 0 290.3 2480.1 H272.8 A4.5 4.5 0 0 0 268.2 2484.6 V2500.8 A4.5 4.5 0 0 0 272.8 2505.3 H294.8 M333.9 2480.1 H311.9 A4.5 4.5 0 0 0 307.4 2484.6 V2488.2 A4.5 4.5 0 0 0 311.9 2492.7 H329.4 A4.5 4.5 0 0 1 333.9 2497.2 V2500.8 A4.5 4.5 0 0 1 329.4 2505.3 H307.4 M345.9 2492.7 H360.3 M371.7 2480.1 H391.9 A4.5 4.5 0 0 1 396.4 2484.6 V2500.8 A4.5 4.5 0 0 1 391.9 2505.3 H371.7 Z M408.9 2492.7 H436.4 V2484.6 A4.5 4.5 0 0 0 431.9 2480.1 H413.4 A4.5 4.5 0 0 0 408.9 2484.6 V2500.8 A4.5 4.5 0 0 0 413.4 2505.3 H436.4 M449.9 2507.4 V2478.0 L474.6 2507.4 V2478.0 M482.3 2480.1 H510.3 M496.3 2480.1 V2507.4" fill="none" stroke="#fff" stroke-width="4.1" stroke-linejoin="miter" stroke-linecap="butt"/>
</svg>
</body></html>
